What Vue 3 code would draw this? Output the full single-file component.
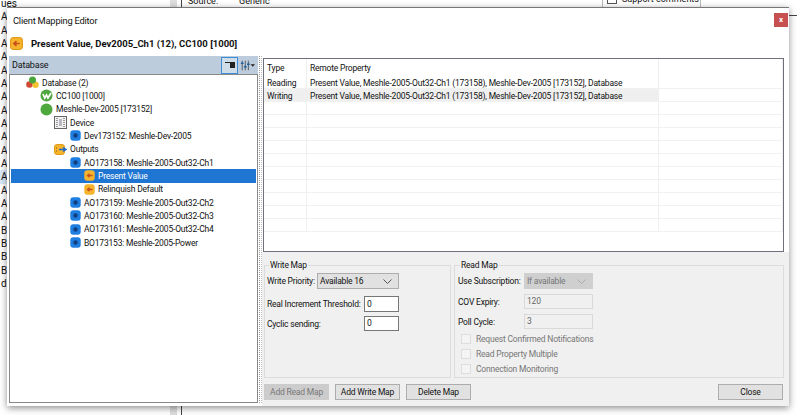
<script setup>
const backgroundRows = [
  'ues','A','A','A','A','A','A','A','A','A','A','A','A','A','A','A','A','B','B','B','B','de'
]
const tree = [
  { icon: 'db', label: 'Database (2)', level: 0 },
  { icon: 'cc', label: 'CC100 [1000]', level: 1 },
  { icon: 'green', label: 'Meshle-Dev-2005 [173152]', level: 1 },
  { icon: 'device', label: 'Device', level: 2 },
  { icon: 'blue', label: 'Dev173152: Meshle-Dev-2005', level: 3 },
  { icon: 'outputs', label: 'Outputs', level: 2 },
  { icon: 'blue', label: 'AO173158: Meshle-2005-Out32-Ch1', level: 3 },
  { icon: 'orange', label: 'Present Value', level: 4, selected: true },
  { icon: 'orange', label: 'Relinquish Default', level: 4 },
  { icon: 'blue', label: 'AO173159: Meshle-2005-Out32-Ch2', level: 3 },
  { icon: 'blue', label: 'AO173160: Meshle-2005-Out32-Ch3', level: 3 },
  { icon: 'blue', label: 'AO173161: Meshle-2005-Out32-Ch4', level: 3 },
  { icon: 'blue', label: 'BO173153: Meshle-2005-Power', level: 3 }
]
const prop = 'Present Value, Meshle-2005-Out32-Ch1 (173158), Meshle-Dev-2005 [173152], Database'
const rows = [
  { type: 'Reading', prop },
  { type: 'Writing', prop, hl: true },
  {}, {}, {}, {}, {}, {}, {}, {}, {}, {}
]
const checks = ['Request Confirmed Notifications', 'Read Property Multiple', 'Connection Monitoring']
</script>

<template>
  <div class="page">
    <div class="behind">
      <div class="behind-list">
        <div v-for="(r, i) in backgroundRows" :key="i" class="behind-row" :class="{ picked: i === 13 }">{{ r }}</div>
      </div>
      <div class="behind-split"></div>
      <div class="behind-main">
        <div class="source"><span>Source:</span><span>Generic</span></div>
        <div class="support"><i></i>Support comments</div>
        <div class="rule"></div>
      </div>
    </div>

    <div class="dialog">
      <div class="titlebar">
        <span>Client Mapping Editor</span>
        <button class="close">x</button>
      </div>
      <div class="subtitle">
        <svg class="ic sub-ic" viewBox="0 0 12 12"><rect x=".5" y=".5" width="11" height="11" rx="3" fill="#f5b42c" stroke="#e09a18"/><path d="M9 6H4M6 3.8 3.6 6 6 8.2" fill="none" stroke="#c9501a" stroke-width="1.6"/></svg>
        <b>Present Value, Dev2005_Ch1 (12), CC100 [1000]</b>
      </div>
      <div class="body">
        <section class="left">
          <header class="panel-head">
            <span>Database</span>
            <div class="tools">
              <button class="tool on">
                <svg viewBox="0 0 12 10" width="12" height="10"><path d="M1 2.500h10" stroke="#222" stroke-width="1"/><rect x="6" y="2" width="5" height="6" fill="#222"/></svg>
              </button>
              <button class="tool">
                <svg viewBox="0 0 17 13" width="17" height="13"><path d="M2.5 1v11M6 1v11M9.500 1v11" stroke="#5a6670" stroke-width="1.2"/><path d="M1 4h3M4.500 8h3M8 5h3" stroke="#1d5f9c" stroke-width="1.8"/><path d="M12 5h5l-2.500 3z" fill="#222"/></svg>
              </button>
            </div>
          </header>
          <div class="tree">
            <div v-for="n in tree" :key="n.label" class="node" :class="['lv' + n.level, { current: n.selected }]">
              <svg v-if="n.icon === 'db'" class="ic" viewBox="0 0 13 13"><circle cx="3.500" cy="8.500" r="3.300" fill="#d24a35"/><circle cx="9.500" cy="8.800" r="3.200" fill="#f3c230"/><circle cx="6.500" cy="4" r="3.500" fill="#4aa53a"/></svg>
              <svg v-else-if="n.icon === 'cc'" class="ic" viewBox="0 0 13 13"><circle cx="6.500" cy="6.500" r="6" fill="#4fa83d"/><path d="M3 5l1.800 4 1.700-3 1.500 3L11 4" fill="none" stroke="#fff" stroke-width="1.700"/></svg>
              <svg v-else-if="n.icon === 'green'" class="ic" viewBox="0 0 13 13"><circle cx="6.500" cy="6.500" r="6" fill="#4fa83d"/></svg>
              <svg v-else-if="n.icon === 'device'" class="ic" viewBox="0 0 13 13"><rect x=".5" y=".5" width="12" height="12" fill="#f2f2f2" stroke="#666"/><path d="M3 2v9M10 2v9" stroke="#444" stroke-dasharray="1 1"/><rect x="5" y="3" width="3" height="7" fill="#b9b9c4"/></svg>
              <svg v-else-if="n.icon === 'outputs'" class="ic" viewBox="0 0 13 13"><rect x=".5" y="1.500" width="10" height="10" rx="2.500" fill="#f5b42c" stroke="#e09a18"/><path d="M2 5h1M2 8h1" stroke="#8a5a10"/><path d="M5 6.500h6M9 4.500l3 2-3 2" fill="none" stroke="#1e68c8" stroke-width="1.400"/></svg>
              <svg v-else-if="n.icon === 'blue'" class="ic small" viewBox="0 0 11 11"><rect x=".3" y=".3" width="10.400" height="10.400" rx="3" fill="#1f7fe0"/><circle cx="5.500" cy="5.500" r="2.200" fill="#123f80"/></svg>
              <svg v-else class="ic small" viewBox="0 0 11 11"><rect x=".3" y=".3" width="10.400" height="10.400" rx="3" fill="#f5b42c"/><path d="M8.500 5.500H4M5.500 3.800 3.500 5.500l2 1.700" fill="none" stroke="#c9501a" stroke-width="1.400"/></svg>
              <span>{{ n.label }}</span>
            </div>
          </div>
        </section>
        <div class="splitter"></div>
        <section class="right">
          <div class="grid-wrap">
            <div class="grid">
              <div class="g-row head"><div class="c1">Type</div><div class="c2">Remote Property</div><div class="c3"></div></div>
              <div v-for="(r, i) in rows" :key="i" class="g-row" :class="{ hl: r.hl }">
                <div class="c1">{{ r.type }}</div><div class="c2">{{ r.prop }}</div><div class="c3"></div>
              </div>
            </div>
          </div>
          <div class="lower">
            <div class="groups">
              <fieldset class="write">
                <legend>Write Map</legend>
                <div class="f-line first"><label>Write Priority:</label><div class="sel w82">Available 16<svg viewBox="0 0 9 5" width="9" height="5"><path d="M.5.500l4 4 4-4" fill="none" stroke="#555"/></svg></div></div>
                <div class="f-line between"><label>Real Increment Threshold:</label><div class="inp w35 tall">0</div></div>
                <div class="f-line between tight"><label>Cyclic sending:</label><div class="inp w35">0</div></div>
              </fieldset>
              <fieldset class="read">
                <legend>Read Map</legend>
                <div class="read-form">
                  <label>Use Subscription:</label><div class="sel off">If available<svg viewBox="0 0 9 5" width="9" height="5"><path d="M.5.500l4 4 4-4" fill="none" stroke="#aaa"/></svg></div>
                  <label>COV Expiry:</label><div class="inp off">120</div>
                  <label>Poll Cycle:</label><div class="inp off">3</div>
                </div>
                <div class="checks">
                  <div v-for="c in checks" :key="c" class="check"><i></i>{{ c }}</div>
                </div>
              </fieldset>
            </div>
            <div class="buttons">
              <button class="btn" disabled>Add Read Map</button>
              <button class="btn">Add Write Map</button>
              <button class="btn">Delete Map</button>
              <button class="btn end">Close</button>
            </div>
          </div>
        </section>
      </div>
    </div>
  </div>
</template>

<style scoped>
.page { position: relative; width: 797px; height: 415px; overflow: hidden; background: #fff; font-family: Roboto, "Liberation Sans", sans-serif; font-size: 8.5px; letter-spacing: -.2px; color: #111; white-space: nowrap; }
.behind { display: flex; height: 100%; letter-spacing: 0; }
.behind-list { width: 170px; margin-top: -3px; flex: none; font-size: 10px; }
.behind-row { height: 13.33px; line-height: 13px; padding-left: 1px; }
.behind-row.picked { background: #d9e8f7; }
.behind-split { flex: none; margin-right: 0; border-right: 1px solid #444; box-sizing: border-box; width: 12px; background: linear-gradient(to right, #dedede 7px, #fff 7px); }
.behind-main { flex: 1; display: flex; align-items: flex-start; font-size: 9px; }
.source { display: flex; gap: 21px; margin: -5px 0 0 6px; width: 414px; line-height: 12px; flex: none; }
.support { display: flex; align-items: center; gap: 5px; width: 99px; height: 12px; box-sizing: border-box; padding: 0 0 6px 4px; margin-top: -4px; border: solid #bbb; border-width: 0 1px; overflow: hidden; flex: none; }
.support i { width: 10px; height: 10px; border: 1px solid #555; box-sizing: border-box; flex: none; }
.rule { margin: 15px 0 0 auto; width: 8px; height: 1px; background: #444; }

.dialog { position: absolute; left: 7px; top: 7px; width: 782px; height: 398px; display: flex; flex-direction: column; background: #fff; border-top: 1px solid #777; box-shadow: 0 2px 7px rgba(0,0,0,.45); }
.titlebar { height: 24px; flex: none; display: flex; align-items: center; justify-content: space-between; padding: 0 1px 0 6px; font-size: 9.300px; }
.close { width: 14px; height: 14px; border: 0; padding: 0 0 2px; background: #c75050; color: #fff; font: 700 8px Roboto, sans-serif; }
.subtitle { height: 24px; flex: none; display: flex; align-items: center; padding: 0 0 2px 3px; box-sizing: border-box; gap: 8px; font-size: 9.500px; letter-spacing: 0; }
.sub-ic { width: 11px; height: 11px; flex: none; }
.subtitle b { font-weight: 700; }
.body { flex: 1; display: flex; min-height: 0; }
.left { width: 249px; margin-left: 2px; flex: none; display: flex; flex-direction: column; }
.panel-head { height: 18px; flex: none; background: #bdccdc; display: flex; align-items: center; justify-content: space-between; padding-left: 3px; font-size: 9px; }
.tools { display: flex; gap: 1px; padding-right: 2px; }
.tool { width: 17px; height: 17px; padding: 0; border: 1px solid transparent; background: transparent; display: flex; align-items: center; justify-content: center; }
.tool.on { border: 1px solid #3c8ed8; background: #cfdde9; }
.tree { flex: 1; border: 1px solid #888; margin-bottom: 3px; padding-top: 1px; }
.node { height: 13.33px; display: flex; align-items: center; gap: 3px; margin: 0 1px; }
.node .ic { flex: none; }
.node.lv0 { padding-left: 15px; }
.node.lv1 { padding-left: 29px; }
.node.lv2 { padding-left: 43px; }
.node.lv3 { padding-left: 59px; }
.node.lv4 { padding-left: 73px; }
.ic { width: 13px; height: 13px; display: block; }
.ic.small { width: 11px; height: 11px; }
.node.current { background: #1f76d2; color: #fff; }
.splitter { width: 3px; box-sizing: border-box; margin: 0 0 3px 1px; border-left: 1px dotted #999; border-right: 1px dotted #bbb; flex: none; }
.right { flex: 1; display: flex; flex-direction: column; min-width: 0; }
.grid-wrap { height: 196px; flex: none; padding: 2px 5px 0 1px; box-sizing: border-box; }
.grid { height: 194px; box-sizing: border-box; border: 1px solid #70707a; overflow: hidden; background: #fff; }
.g-row { display: grid; grid-template-columns: 43px 352px 1fr; height: 13px; box-sizing: border-box; line-height: 15px; border-bottom: 1px solid #f1f1f1; }
.g-row.head { height: 17px; line-height: 19px; border-bottom: 0; }
.g-row > div { padding-left: 3px; overflow: hidden; border-right: 1px solid #eee; }
.g-row.hl .c1, .g-row.hl .c2 { background: #efefef; }
.lower { flex: 1; background: #f0f0f0; padding: 7px 5px 0 2px; display: flex; flex-direction: column; min-height: 0; }
.groups { display: flex; gap: 3px; height: 119px; flex: none; }
fieldset { margin: 0; border: 1px solid #dcdcdc; padding: 0; min-width: 0; box-sizing: border-box; }
legend { margin-left: 2px; padding: 0 1px; line-height: 12px; }
.write { width: 187px; flex: none; padding: 2px 2px 0 2px; }
.read { flex: 1; padding: 2px 0 0 3px; }
.f-line { display: flex; align-items: center; justify-content: space-between; width: 132px; }
.f-line.first { height: 16px; }
.f-line.between { margin-top: 7px; }
.f-line.tight { margin-top: 4px; }
.sel { height: 16px; display: flex; align-items: center; justify-content: space-between; padding: 0 6px 0 2px; background: #e1e1e1; border: 1px solid #adadad; box-sizing: border-box; }
.w82 { width: 82px; }
.sel.off { background: #cfcfcf; border-color: #cfcfcf; color: #777; }
.inp { height: 15px; box-sizing: border-box; padding-left: 2px; line-height: 13px; background: #fff; border: 1px solid #777; }
.inp.tall { height: 16px; line-height: 14px; }
.w35 { width: 35px; }
.inp.off { background: #f0f0f0; border-color: #d9d9d9; color: #666; }
.read-form { display: grid; grid-template-columns: 66px 69px; row-gap: 5px; align-items: center; }
.checks { margin-top: 2px; }
.check { display: flex; align-items: center; gap: 5px; height: 15px; padding-left: 3px; color: #777; }
.check i { width: 10px; height: 10px; background: #f4f4f4; border: 1px solid #ddd; box-sizing: border-box; flex: none; }
.buttons { display: flex; gap: 6px; margin-top: 6px; }
.btn { width: 65px; height: 16px; padding: 0; font: inherit; letter-spacing: inherit; line-height: 14px; color: #111; background: #e1e1e1; border: 1px solid #adadad; box-sizing: border-box; }
.btn:disabled { background: #ccc; border-color: #ccc; color: #777; }
.btn.end { margin-left: auto; margin-right: 1px; }
</style>
